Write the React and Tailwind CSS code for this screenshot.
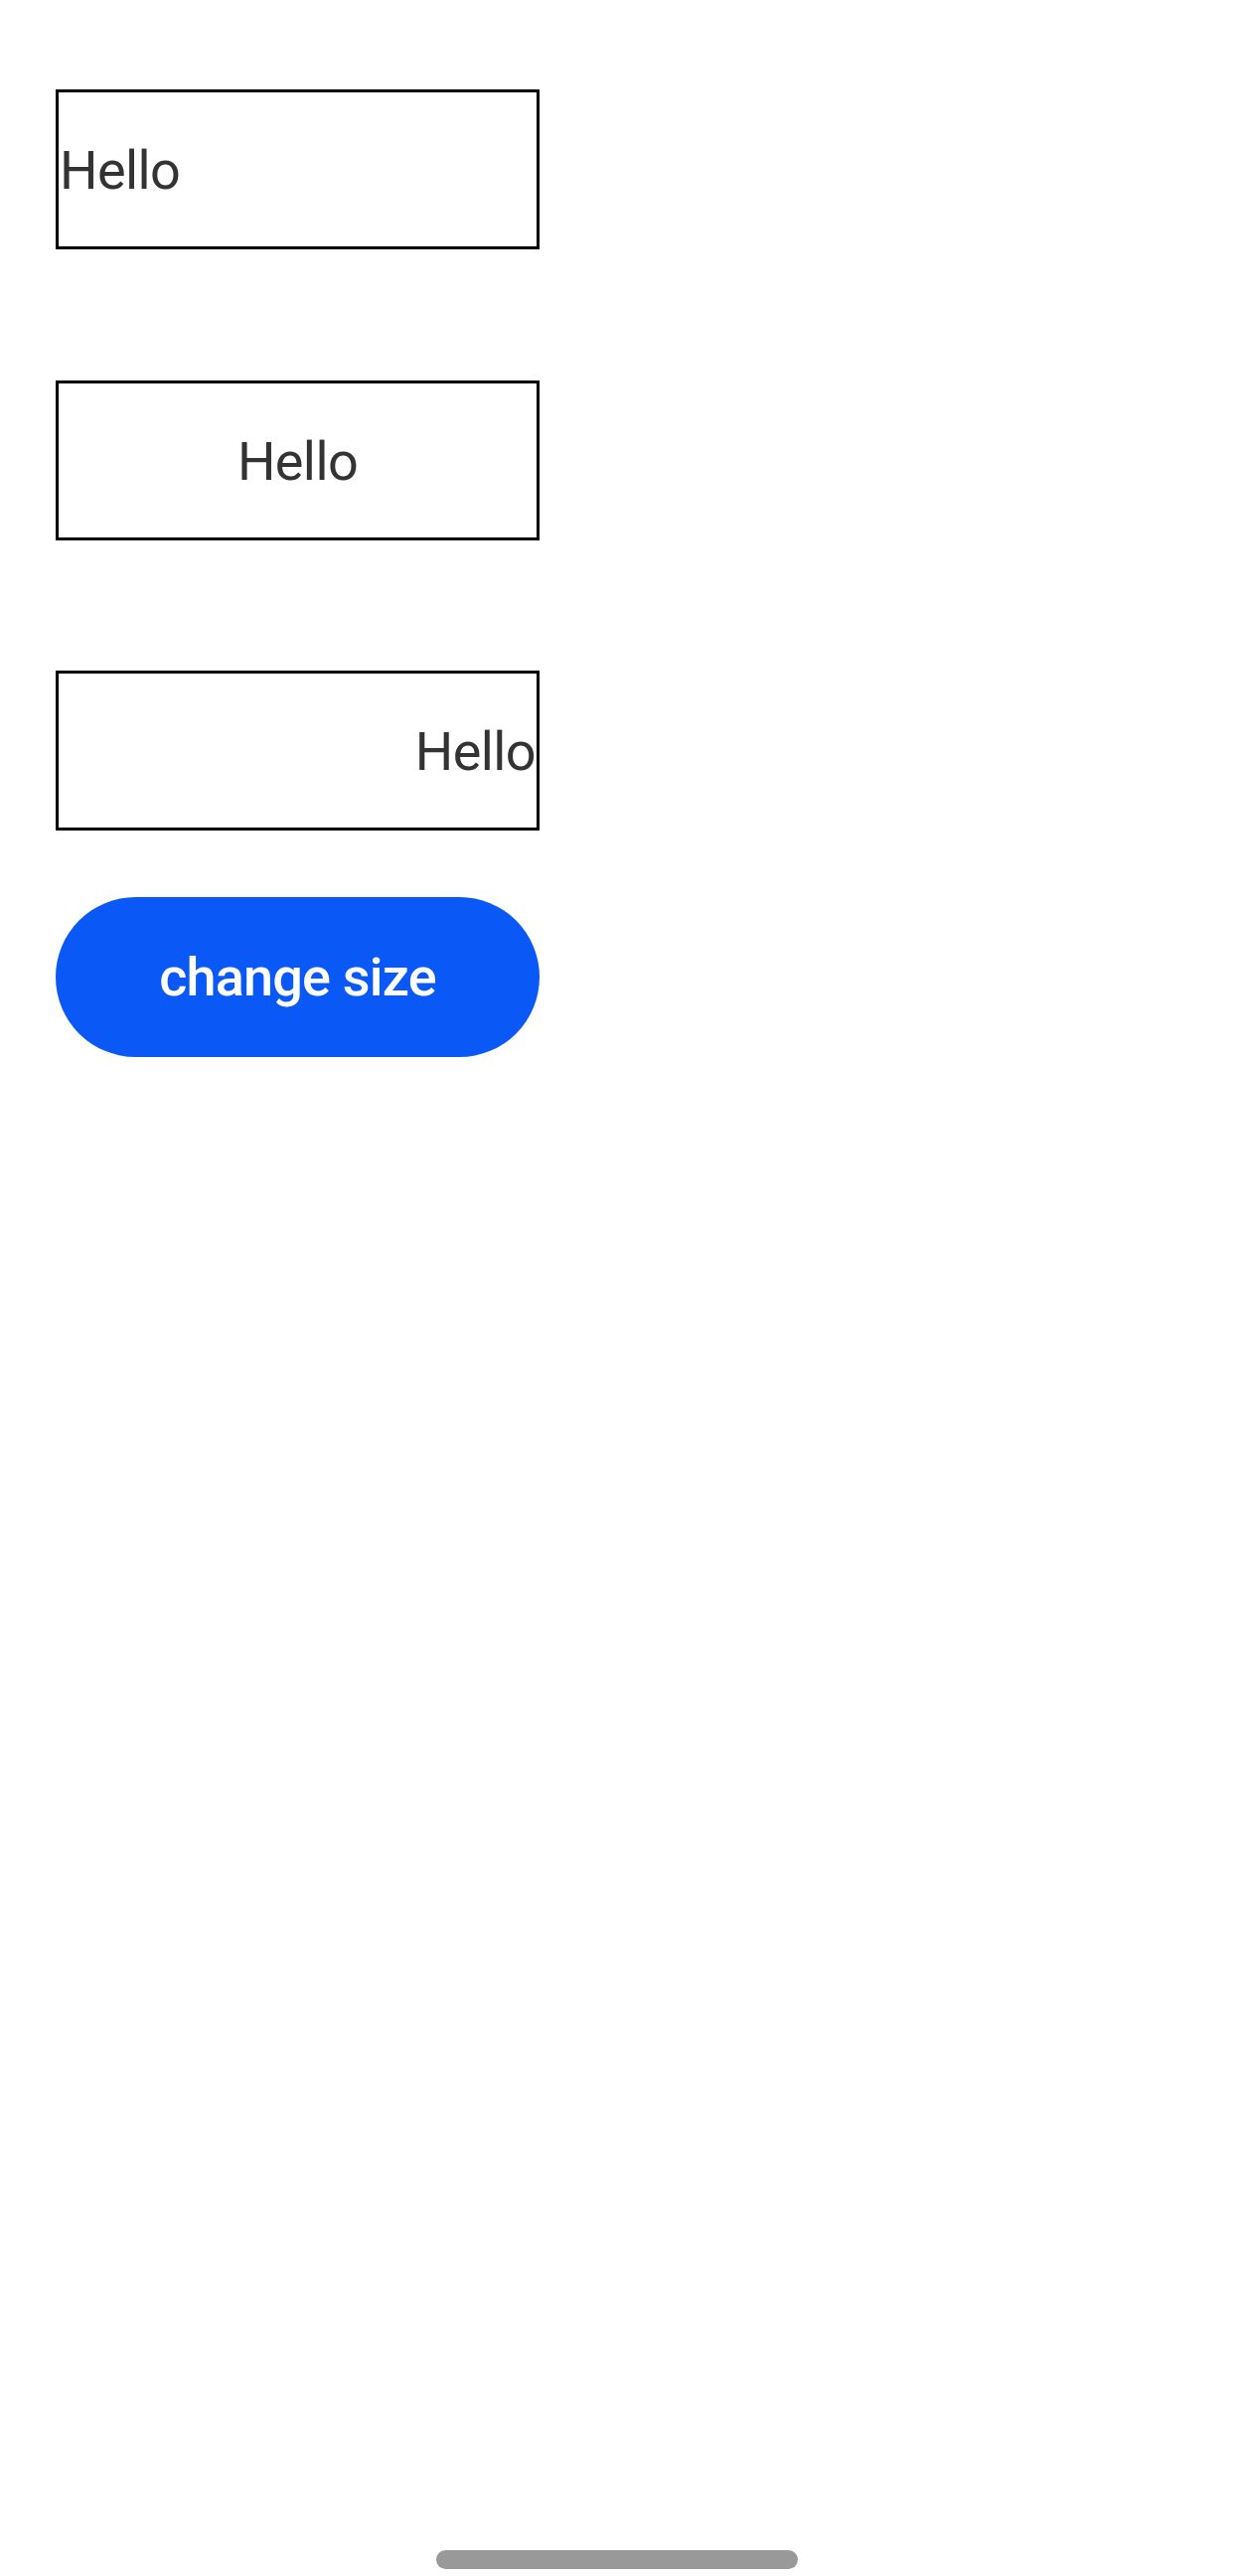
const FONT = { fontFamily: 'Roboto, "Noto Sans", sans-serif' };

const ALIGN = {
  start: 'justify-start',
  center: 'justify-center',
  end: 'justify-end',
};

function TextBox({ align = 'start', className = '' }) {
  return (
    <div
      className={`flex h-[161px] w-[487px] items-center border-[3px] border-black px-[1px] ${ALIGN[align]} ${className}`}
    >
      <span className="pt-[2px] text-[54px] leading-none tracking-[-0.6px] text-[#333333]">Hello</span>
    </div>
  );
}

export default function App() {
  return (
    <div className="flex min-h-[2593px] w-full flex-col bg-white" style={FONT}>
      <div className="flex flex-col pl-[56px] pt-[90px]">
        <TextBox align="start" />
        <TextBox align="center" className="mt-[132px]" />
        <TextBox align="end" className="mt-[131px]" />

        {/* change size button */}
        <button className="mt-[67px] flex h-[161px] w-[487px] items-center justify-center rounded-full bg-[#0a59f7]">
          <span className="text-[54px] font-medium leading-none tracking-[-0.8px] text-white">change size</span>
        </button>
      </div>

      {/* home indicator */}
      <div className="mt-auto flex justify-center pb-[7px]">
        <div className="ml-[-7px] h-[19px] w-[364px] rounded-full bg-[#999999]" />
      </div>
    </div>
  );
}
